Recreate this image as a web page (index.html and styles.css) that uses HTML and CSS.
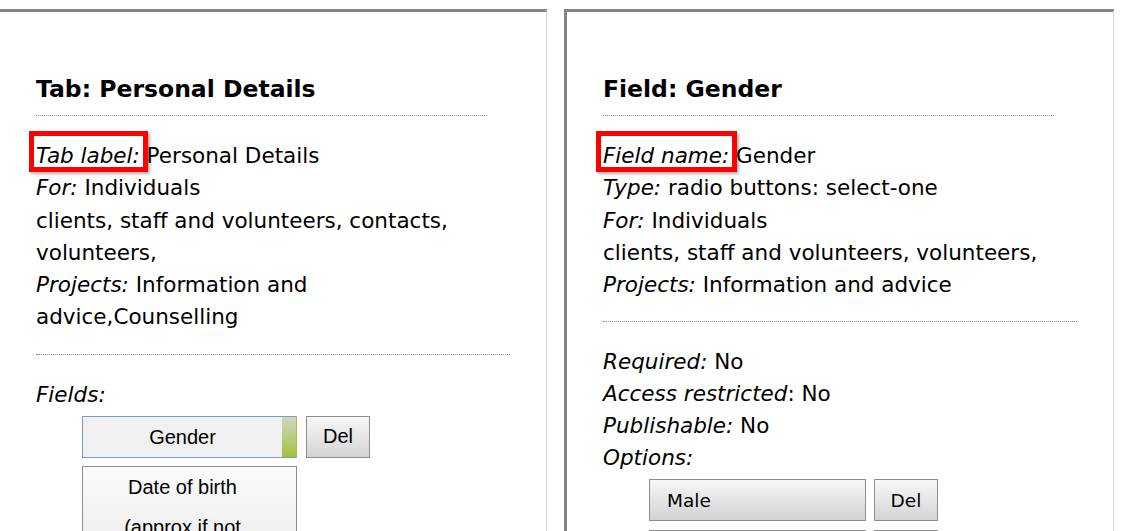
FILE: index.html
```html
<!DOCTYPE html>
<html>
<head>
<meta charset="utf-8">
<title>Tab and field details</title>
<link rel="stylesheet" href="styles.css">
</head>
<body>
<div class="panels">
  <section class="panel">
    <h2 class="panel-title">Tab: Personal Details</h2>
    <div class="info">
      <div><em class="hl">Tab label:</em> Personal Details</div>
      <div><em>For:</em> Individuals</div>
      <div>clients, staff and volunteers, contacts,<br>volunteers,</div>
      <div><em>Projects:</em> Information and<br>advice,Counselling</div>
    </div>
    <div class="info-after">
      <div><em>Fields:</em></div>
      <ul class="btn-list">
        <li class="btn-row">
          <button class="field-btn active">Gender</button>
          <button class="del-btn">Del</button>
        </li>
        <li class="btn-row">
          <button class="field-btn multi">Date of birth (approx if not known)</button>
        </li>
      </ul>
    </div>
  </section>
  <section class="panel">
    <h2 class="panel-title">Field: Gender</h2>
    <div class="info">
      <div><em class="hl">Field name:</em> Gender</div>
      <div><em>Type:</em> radio buttons: select-one</div>
      <div><em>For:</em> Individuals</div>
      <div>clients, staff and volunteers, volunteers,</div>
      <div><em>Projects:</em> Information and advice</div>
    </div>
    <div class="info-after">
      <div><em>Required:</em> No</div>
      <div><em>Access restricted</em>: No</div>
      <div><em>Publishable:</em> No</div>
      <div><em>Options:</em></div>
      <ul class="btn-list options">
        <li class="btn-row">
          <button class="option-btn">Male</button>
          <button class="del-btn del-alt">Del</button>
        </li>
        <li class="btn-row">
          <button class="option-btn">Female</button>
          <button class="del-btn del-alt">Del</button>
        </li>
      </ul>
    </div>
  </section>
</div>
</body>
</html>
```

FILE: styles.css
```css
html, body {
  margin: 0;
  padding: 0;
  background: #fff;
}
body {
  height: 531px;
  overflow: hidden;
  font-family: "DejaVu Sans", Verdana, sans-serif;
  font-size: 21.5px;
  color: #000;
}
.panels {
  display: flex;
  gap: 17px;
  padding-top: 9px;
  margin-left: -3px;
  align-items: flex-start;
}
.panel {
  box-sizing: border-box;
  width: 550px;
  height: 700px;
  flex: none;
  border-top: 3px solid #858585;
  border-left: 3px solid #858585;
  border-right: 1px solid #d6d6d6;
  padding: 0 36px 0 36px;
}
.panel-title {
  margin: 61px 23px 0 0;
  padding-bottom: 10px;
  font-size: 23.5px;
  line-height: 32px;
  font-weight: bold;
  border-bottom: 1px dotted #8a8a8a;
}
.info {
  margin-top: 24px;
  line-height: 32.25px;
  padding-bottom: 20px;
  border-bottom: 1px dotted #8a8a8a;
}
.info-after {
  margin-top: 24px;
  line-height: 32px;
}
.hl {
  position: relative;
}
.hl::after {
  content: "";
  position: absolute;
  left: -7px;
  right: -8px;
  top: -12px;
  bottom: -4px;
  border: 5px solid #f00;
  box-shadow: 2px 2px 3px rgba(0, 0, 0, 0.3);
}
.btn-list {
  list-style: none;
  margin: 5px 0 0 46px;
  padding: 0;
  display: flex;
  flex-direction: column;
  gap: 8px;
}
.btn-list.options {
  gap: 9px;
}
.btn-row {
  display: flex;
  align-items: flex-start;
  gap: 9px;
}
button {
  margin: 0;
  color: #000;
  cursor: pointer;
}
.field-btn {
  box-sizing: border-box;
  width: 215px;
  font-family: "Liberation Sans", Arial, sans-serif;
  font-size: 20px;
  line-height: 40px;
  padding: 0 22px 0 8px;
  text-align: center;
  border: 1px solid #8d8d8d;
  background: linear-gradient(to bottom, #fbfbfb, #dcdcdc 180px);
}
.field-btn.multi {
  padding: 0 38px 0 24px;
}
.field-btn.active {
  border-color: #7f9cbc;
  border-right-color: #a6c34a;
  background: linear-gradient(to bottom, #d2d5c6, #a3c23a) right top / 14px 100% no-repeat, #f0f0f0;
}
.del-btn {
  box-sizing: border-box;
  width: 64px;
  height: 42px;
  font-family: "Liberation Sans", Arial, sans-serif;
  font-size: 20px;
  padding: 0;
  border: 1px solid #8d8d8d;
  background: linear-gradient(to bottom, #f7f7f7, #d4d4d4);
}
.del-alt {
  font-family: "DejaVu Sans", Verdana, sans-serif;
  font-size: 18.5px;
}
.option-btn {
  box-sizing: border-box;
  width: 217px;
  height: 42px;
  padding: 0 0 0 17px;
  text-align: left;
  font-family: "DejaVu Sans", Verdana, sans-serif;
  font-size: 18.5px;
  border: 1px solid #8d8d8d;
  background: linear-gradient(to bottom, #f7f7f7, #d2d2d2);
}
.btn-row .option-btn + .del-btn {
  margin-left: -1px;
}
```
